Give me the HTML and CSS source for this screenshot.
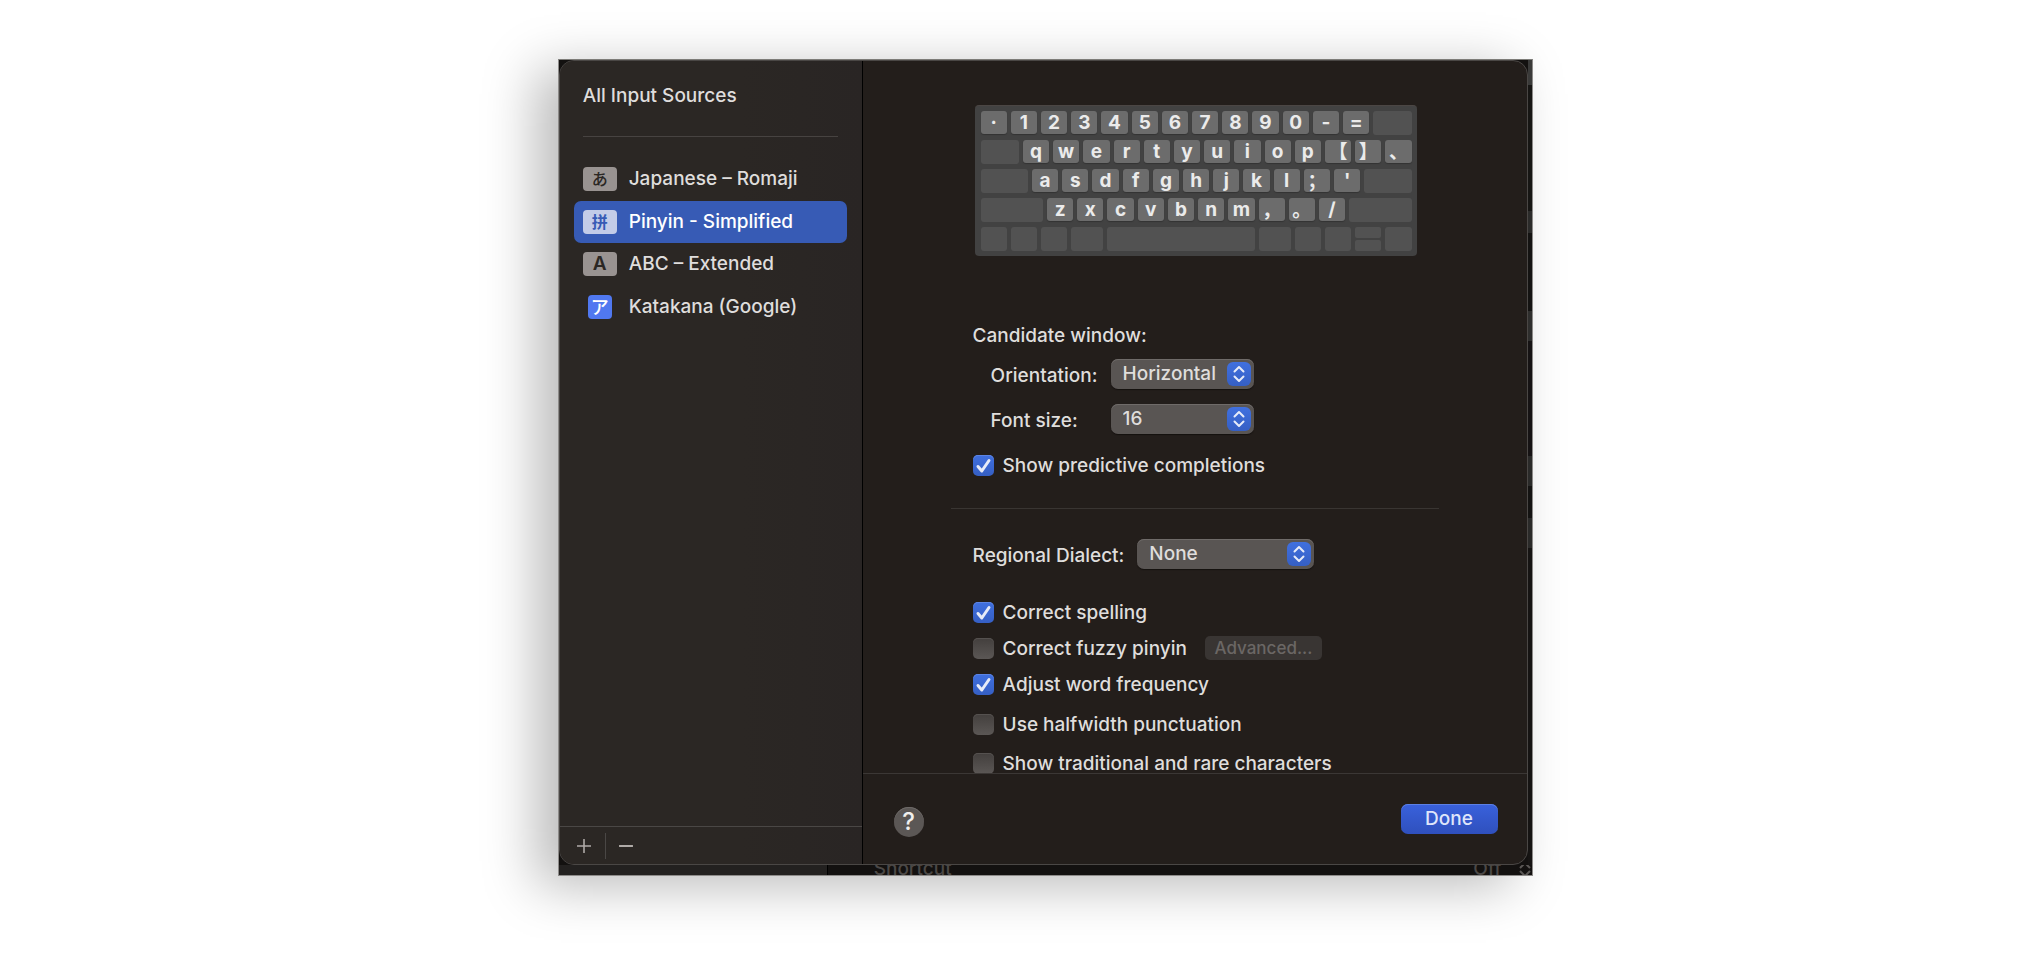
FILE: index.html
```html
<!DOCTYPE html>
<html lang="en">
<head>
<meta charset="utf-8">
<title>Input Sources</title>
<link rel="stylesheet" href="styles.css">
</head>
<body>
<div class="backdrop">
  <section class="dialog" aria-label="Input Sources">
    <aside class="sidebar">
      <h1 class="sidebar-title">All Input Sources</h1>
      <hr class="sidebar-rule">
      <ul class="sources">
        <li><button class="source" type="button"><span class="badge">あ</span><span>Japanese – Romaji</span></button></li>
        <li><button class="source selected" type="button"><span class="badge badge-sc">拼</span><span>Pinyin - Simplified</span></button></li>
        <li><button class="source" type="button"><span class="badge badge-latin">A</span><span>ABC – Extended</span></button></li>
        <li><button class="source" type="button"><span class="badge badge-google">ア</span><span>Katakana (Google)</span></button></li>
      </ul>
      <div class="sidebar-tools">
        <button class="tool" type="button" aria-label="Add"><svg width="14" height="14" viewBox="0 0 14 14"><path d="M7 0.5V13.5M0.5 7H13.5" stroke-width="1.6"/></svg></button>
        <span class="tool-divider"></span>
        <button class="tool" type="button" aria-label="Remove"><svg width="14" height="14" viewBox="0 0 14 14"><path d="M0.5 7H13.5" stroke-width="1.8"/></svg></button>
      </div>
    </aside>
    <main class="main">
      <div class="scroll">
        <div class="settings">
          <div class="keyboard">
            <div class="krow"><span class="key">·</span><span class="key">1</span><span class="key">2</span><span class="key">3</span><span class="key">4</span><span class="key">5</span><span class="key">6</span><span class="key">7</span><span class="key">8</span><span class="key">9</span><span class="key">0</span><span class="key">-</span><span class="key">=</span><span class="blank w38"></span></div>
            <div class="krow"><span class="blank w38"></span><span class="key">q</span><span class="key">w</span><span class="key">e</span><span class="key">r</span><span class="key">t</span><span class="key">y</span><span class="key">u</span><span class="key">i</span><span class="key">o</span><span class="key">p</span><span class="key cjk">【</span><span class="key cjk">】</span><span class="key cjk">、</span></div>
            <div class="krow"><span class="blank w47"></span><span class="key">a</span><span class="key">s</span><span class="key">d</span><span class="key">f</span><span class="key">g</span><span class="key">h</span><span class="key">j</span><span class="key">k</span><span class="key">l</span><span class="key cjk">；</span><span class="key">'</span><span class="blank w47"></span></div>
            <div class="krow"><span class="blank w62"></span><span class="key">z</span><span class="key">x</span><span class="key">c</span><span class="key">v</span><span class="key">b</span><span class="key">n</span><span class="key">m</span><span class="key cjk">，</span><span class="key cjk">。</span><span class="key">/</span><span class="blank w62"></span></div>
            <div class="krow"><span class="blank"></span><span class="blank"></span><span class="blank"></span><span class="blank w32"></span><span class="blank w147"></span><span class="blank w32"></span><span class="blank"></span><span class="blank"></span><span class="split"><span></span><span></span></span><span class="blank"></span></div>
          </div>

          <h2 class="group-title">Candidate window:</h2>
          <div class="fields">
            <label for="orientation">Orientation:</label>
            <span class="popup"><select id="orientation"><option>Horizontal</option><option>Vertical</option></select><svg class="arrows" viewBox="0 0 24 24"><path d="M7.5 9.5L12 5L16.500 9.500M7.500 14.500L12 19L16.500 14.500"/></svg></span>
            <label for="fontsize">Font size:</label>
            <span class="popup"><select id="fontsize"><option>16</option><option>18</option></select><svg class="arrows" viewBox="0 0 24 24"><path d="M7.5 9.5L12 5L16.500 9.500M7.500 14.500L12 19L16.500 14.500"/></svg></span>
          </div>
          <label class="check predictive"><span class="box"><input type="checkbox" checked><svg viewBox="0 0 21 21"><path d="M5 11.500L8.800 16L16 5.500"/></svg></span><span class="check-text">Show predictive completions</span></label>

          <hr class="rule">

          <div class="dialect">
            <label for="dialect">Regional Dialect:</label>
            <span class="popup popup-wide"><select id="dialect"><option>None</option></select><svg class="arrows" viewBox="0 0 24 24"><path d="M7.5 9.5L12 5L16.500 9.500M7.500 14.500L12 19L16.500 14.500"/></svg></span>
          </div>

          <div class="tight">
            <label class="check"><span class="box"><input type="checkbox" checked><svg viewBox="0 0 21 21"><path d="M5 11.500L8.800 16L16 5.500"/></svg></span><span class="check-text">Correct spelling</span></label>
            <div class="fuzzy">
              <label class="check"><span class="box"><input type="checkbox"><svg viewBox="0 0 21 21"><path d="M5 11.500L8.800 16L16 5.500"/></svg></span><span class="check-text">Correct fuzzy pinyin</span></label>
              <button class="advanced" type="button" disabled>Advanced...</button>
            </div>
            <label class="check"><span class="box"><input type="checkbox" checked><svg viewBox="0 0 21 21"><path d="M5 11.500L8.800 16L16 5.500"/></svg></span><span class="check-text">Adjust word frequency</span></label>
          </div>
          <div class="loose">
            <label class="check"><span class="box"><input type="checkbox"><svg viewBox="0 0 21 21"><path d="M5 11.500L8.800 16L16 5.500"/></svg></span><span class="check-text">Use halfwidth punctuation</span></label>
            <label class="check"><span class="box"><input type="checkbox"><svg viewBox="0 0 21 21"><path d="M5 11.500L8.800 16L16 5.500"/></svg></span><span class="check-text">Show traditional and rare characters</span></label>
          </div>
        </div>
      </div>
      <footer class="footer">
        <button class="help" type="button" aria-label="Help">?</button>
        <button class="done" type="button">Done</button>
      </footer>
    </main>
  </section>
  <div class="edge"></div>
  <div class="behind">
    <div class="behind-side"></div>
    <div class="behind-row">
      <span>Shortcut</span>
      <span class="behind-value">Off<svg width="14" height="14" viewBox="0 0 14 14"><path d="M2 7L7 2L12 7M2 10L7 15L12 10"/></svg></span>
    </div>
  </div>
</div>
</body>
</html>
```

FILE: styles.css
```css
* { box-sizing: border-box; }

body {
  margin: 0;
  height: 100vh;
  min-height: 600px;
  padding: 59px 0 82px 27.5%;
  overflow: hidden;
  background: #fff;
  color: #dfdddc;
  font: 450 19px/24px Inter, "Noto Sans CJK SC", sans-serif;
}

button, select, input { font: inherit; color: inherit; margin: 0; }
button { border: 0; padding: 0; background: none; }
h1, h2 { margin: 0; font-size: inherit; font-weight: inherit; }
hr { border: 0; margin: 0; height: 1px; }

.backdrop {
  width: 66.3%;
  height: 100%;
  display: grid;
  grid-template-columns: 1fr 4px;
  grid-template-rows: 1fr 10px;
  border: 1px solid #8d8b89;
  border-top-color: #7d7c78;
  background: #131110;
  box-shadow: -22px 10px 50px rgba(0, 0, 0, .27);
}

.dialog {
  display: grid;
  grid-template-columns: 303px 1fr;
  min-height: 0;
  border: 1px solid #4a4745;
  border-radius: 15px;
  overflow: hidden;
  background: #231e1b;
}

.sidebar {
  display: flex;
  flex-direction: column;
  border-right: 1px solid #000;
  background: linear-gradient(90deg, #2b2724 60%, #292524);
}
.sidebar-title { padding: 23px 23px 0; }
.sidebar-rule { margin: 28px 24px 21px 23px; background: #474341; }

.sources {
  margin: 0;
  padding: 0 15px 0 14px;
  height: 170px;
  list-style: none;
  display: grid;
  grid-auto-rows: 1fr;
}
.source {
  width: 100%;
  height: 100%;
  display: flex;
  align-items: center;
  gap: 12px;
  padding: 0 9px;
  border-radius: 7px;
}
.source span:last-child { line-height: 26px; }
.selected { background: #375bb5; color: #fff; }

.badge {
  width: 34px;
  height: 24px;
  border-radius: 4px;
  background: #999391;
  color: #2b2724;
  font: 500 16px/22px "Noto Sans CJK JP", sans-serif;
  text-align: center;
}
.badge-sc { background: #c3cce8; color: #375bb5; font-family: "Noto Sans CJK SC", sans-serif; font-weight: 700; }
.badge-latin { font-family: Inter, sans-serif; font-size: 19px; font-weight: 600; line-height: 24px; }
.badge-google { width: 24px; margin: 0 5px; background: #5078f0; color: #fff; font-size: 18px; }

.sidebar-tools {
  margin-top: auto;
  height: 38px;
  display: flex;
  align-items: center;
  padding-left: 4px;
  border-top: 1px solid #4a4745;
}
.tool { width: 41px; height: 30px; display: grid; place-items: center; stroke: #b0aba8; stroke-linecap: round; }
.tool-divider { width: 1px; height: 26px; background: #4a4745; }

.main { display: flex; flex-direction: column; min-width: 0; min-height: 0; }
.scroll { flex: 1; min-height: 0; overflow: auto; scrollbar-width: none; }
.settings { max-width: 488px; margin: 0 auto; padding: 44px 22px 16px; }

.keyboard {
  display: grid;
  gap: 5px;
  margin: 0 0 0 2px;
  padding: 5px 5px 5px 6px;
  border-radius: 4px;
  background: #424242;
  border-top: 1px solid #4b4644;
}
.krow { display: flex; gap: 4px; height: 24px; }
.key, .blank, .split { flex: 26 1 0; min-width: 0; }
.key {
  height: 23px;
  border-radius: 3px;
  background: #6c6c6c;
  box-shadow: 0 1px 1px #343434;
  color: #ebebeb;
  font: 700 19px/24px Inter, "Noto Sans CJK SC", sans-serif;
  text-align: center;
}
.cjk { font: 700 19px/22px "Noto Sans CJK SC", sans-serif; display: flex; justify-content: center; }
.blank { border-radius: 3px; background: #525252; }
.w32 { flex-grow: 32; }
.w38 { flex-grow: 38; }
.w47 { flex-grow: 47; }
.w62 { flex-grow: 62; }
.w147 { flex-grow: 147; }
.split { display: grid; gap: 2px; }
.split span { border-radius: 2px; background: #525252; }

.group-title { margin-top: 68px; }
.fields {
  display: grid;
  grid-template-columns: 120px 143px;
  row-gap: 15px;
  padding-left: 18px;
  margin-top: 11px;
}
.fields label, .dialect label { line-height: 34px; height: 30px; }

.popup { display: grid; height: 30px; }
.popup > * { grid-area: 1 / 1; }
.popup select {
  appearance: none;
  width: 100%;
  height: 30px;
  padding: 0 30px 0 12px;
  border: 0;
  border-radius: 7px;
  background: #595553;
  box-shadow: inset 0 1px #6f6b69, 0 1px 1px #15110f;
}
.popup-wide { width: 177px; }
.arrows {
  width: 24px;
  height: 24px;
  justify-self: end;
  align-self: center;
  margin-right: 3px;
  border-radius: 6px;
  background: linear-gradient(#4070df, #355fc4);
  pointer-events: none;
}
.arrows path, .box path { fill: none; stroke: #e6ebf8; stroke-width: 2; stroke-linecap: round; stroke-linejoin: round; }

.check { display: flex; align-items: center; gap: 9px; height: 24px; }
.check-text { padding-top: 2px; }
.predictive { margin-top: 19px; }
.box { display: grid; width: 21px; height: 21px; }
.box > * { grid-area: 1 / 1; width: 21px; height: 21px; }
.box input {
  appearance: none;
  border-radius: 5px;
  background: linear-gradient(#433f3d, #5b5755);
  box-shadow: inset 0 1px #55514f;
}
.box input:checked { background: linear-gradient(#4070df, #355fc4); box-shadow: inset 0 1px #5c84e3; }
.box svg { visibility: hidden; pointer-events: none; }
.box input:checked + svg { visibility: visible; }
.box path { stroke-width: 3; }

.rule { margin: 31px -22px 30px; background: #393532; }
.dialect { display: flex; gap: 13px; }
.tight { display: grid; gap: 12px; margin-top: 31px; }
.loose { display: grid; gap: 15px; margin-top: 16px; }
.fuzzy { display: flex; gap: 18px; }
.advanced {
  width: 117px;
  height: 24px;
  border-radius: 5px;
  background: #393533;
  color: #6b6765;
  font-size: 17px;
  line-height: 24px;
}

.footer {
  height: 91px;
  display: flex;
  justify-content: space-between;
  padding: 30px 29px 0 31px;
  border-top: 1px solid #3b3735;
}
.help {
  width: 30px;
  height: 30px;
  margin-top: 3px;
  border-radius: 50%;
  background: #5b5755;
  box-shadow: inset 0 1px #6f6b69;
  color: #f0efee;
  font-size: 24px;
}
.done {
  width: 97px;
  height: 30px;
  border-radius: 7px;
  background: linear-gradient(#3961dc, #2f50bd);
  box-shadow: inset 0 1px #5c80e4;
  color: #dfe5fa;
}

/* Sliver of the window underneath, seen past the dialog's right and bottom sides */
.edge {
  background: linear-gradient(#3a3a39 0 25px, #171614 25px 151px, #2b2b2a 151px 173px, #141312 173px 251px,
    #2e2e2d 251px 281px, #161314 281px 396px, #2a2a29 396px 426px, #141312 426px 458px, #2a2a29 458px 488px, #161413 488px);
}
.behind {
  grid-column: 1 / -1;
  display: grid;
  grid-template-columns: 269px 1fr;
  overflow: hidden;
  color: #4b4846;
}
.behind-side { background: #232120; border-right: 1px solid #000; }
.behind-row { display: flex; justify-content: space-between; align-items: end; height: 10px; padding-left: 46px; line-height: 12px; }
.behind-value { display: flex; align-items: end; gap: 16px; }
.behind-value path { fill: none; stroke: #5b5856; stroke-width: 2; }
```
